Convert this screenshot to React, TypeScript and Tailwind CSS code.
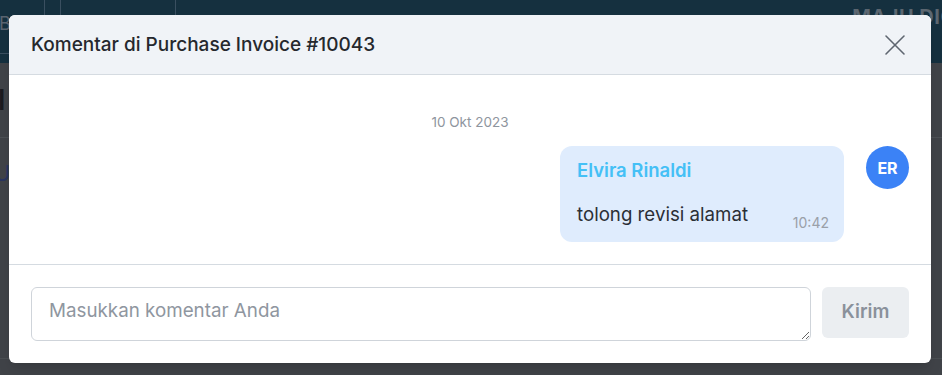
import React from "react";

export default function App() {
  return (
    <div
      className="relative w-[942px] h-[375px] overflow-hidden bg-[#404348]"
      style={{ fontFamily: "Inter, 'Noto Sans', sans-serif" }}
    >
      {/* background page (under overlay) */}
      <div className="flex flex-col h-full">
        <div className="h-[63px] bg-[#15303f] flex items-start relative">
          <div className="ml-[-20px] mt-[-6px] w-[65px] h-[60px] rounded-md border border-[#3a4f60] flex items-center pl-[18px] text-[#5a6470] text-lg">
            Bo
          </div>
          <div className="ml-[15px] mt-[-6px] w-[116px] h-[60px] rounded-md border border-[#3a4f60]" />
          <div className="ml-auto mr-[-20px] mt-[2px] text-[20px] font-bold text-[#5b6670] tracking-wide">
            MAJU DIGI
          </div>
        </div>
        <div className="h-[75px] border-b border-[#4c5055] flex items-center">
          <span className="text-[28px] text-[#1b1b20] font-semibold ml-[-2px]">l</span>
        </div>
        <div className="h-[70px] flex items-center">
          <span className="text-[22px] text-[#2a3560] ml-[-6px]">U</span>
        </div>
        <div className="flex-1 border-t border-[#4a4e52] mt-[150px]" />
      </div>

      {/* dialog */}
      <div className="absolute left-[9px] top-[15px] w-[922px] h-[348px] bg-white rounded-md flex flex-col overflow-hidden shadow-lg">
        <div className="h-[60px] bg-[#f0f3f7] border-b border-[#d5dbe1] flex items-center justify-between px-[22px]">
          <div className="text-[19px] leading-7 font-medium text-[#25282d]">
            Komentar di Purchase Invoice #10043
          </div>
          <button className="w-[26px] h-[26px] flex items-center justify-center text-[#5f6670] mr-[1px] mt-[1px]">
            <svg width="22" height="22" viewBox="0 0 22 22" fill="none" stroke="currentColor" strokeWidth="1.6" strokeLinecap="round">
              <path d="M2 2 L20 20 M20 2 L2 20" />
            </svg>
          </button>
        </div>

        <div className="h-[190px] border-b border-[#d5dbe1] px-[22px] pt-[39px] flex flex-col">
          <div className="text-center text-[13.5px] text-[#8e959e] leading-4">10 Okt 2023</div>
          <div className="mt-[16px] flex justify-end items-start gap-[22px]">
            <div className="w-[284px] rounded-xl bg-[#dfecfd] px-[17px] pt-[12px] pb-[10px]">
              <div className="text-[18.5px] font-semibold text-[#44c0f6] leading-6">Elvira Rinaldi</div>
              <div className="mt-[21px] flex items-end justify-between">
                <span className="text-[18.7px] text-[#2b2f36] leading-6 mb-[5px]">tolong revisi alamat</span>
                <span className="text-[14px] text-[#9aa0a8] leading-4 mr-[-2px] mb-[1px]">10:42</span>
              </div>
            </div>
            <div className="w-[43px] h-[43px] rounded-full bg-[#3b82f6] flex items-center justify-center text-white text-[16px] font-bold">
              ER
            </div>
          </div>
        </div>

        <div className="flex-1 px-[22px] pt-[22px] flex items-start gap-[11px]">
          <textarea
            className="w-[780px] h-[54px] rounded-md border border-[#cfd4da] px-[17px] pt-[11px] text-[18.8px] leading-6 text-[#333] placeholder:text-[#8f96a0] outline-none resize-y"
            placeholder="Masukkan komentar Anda"
          />
          <button className="w-[87px] h-[51px] rounded-md bg-[#ebeef1] text-[18.8px] font-semibold text-[#8a919b]">
            Kirim
          </button>
        </div>
      </div>
    </div>
  );
}
